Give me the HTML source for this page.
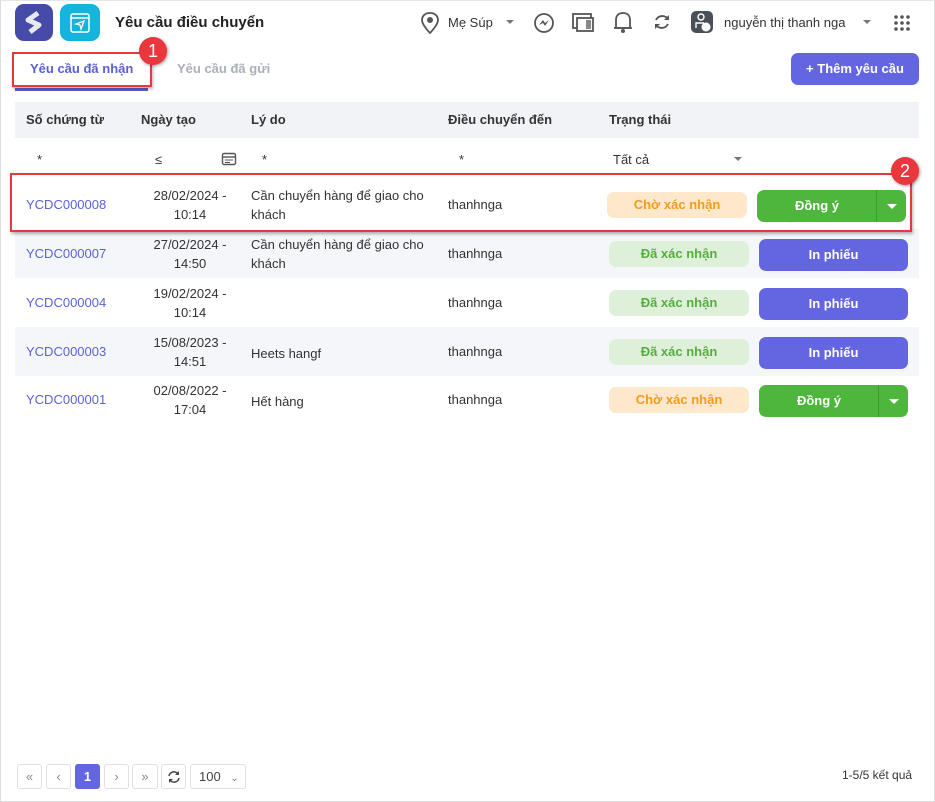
<!DOCTYPE html>
<html><head><meta charset="utf-8"><style>
*{box-sizing:border-box;margin:0;padding:0}
body{width:935px;height:802px;background:#fff;font-family:"Liberation Sans","Noto Sans CJK SC",sans-serif;color:#333;position:relative;overflow:hidden;font-size:13px}
.frame{position:absolute;left:0;top:0;width:935px;height:802px;border:1px solid #dcdcdc;border-top:1px solid #e6e6e6}
.abs{position:absolute}
.hdr{position:absolute;left:15px;top:102px;width:904px;height:36px;background:#f2f3f7;font-weight:bold;font-size:13px}
.hdr span{position:absolute;top:10px}
.row{position:absolute;left:15px;width:904px;height:49px}
.row.g{background:#f5f6f9}
.row span{position:absolute;font-size:13px}
.code{color:#5a62d6;left:11px;top:17px}
.date{left:120px;width:110px;text-align:center;top:6px;line-height:19px}
.rs{left:236px;top:6px;line-height:19px}
.dst{left:433px;top:17px}
.st{left:594px;top:12px;width:140px;height:26px;border-radius:7px;text-align:center;line-height:26px;font-weight:bold;font-size:13px}
.wait{background:#fde8cc;color:#f59b1c}
.ok{background:#dff0da;color:#55ad3e}
.btn{position:absolute;left:744px;top:10px;width:149px;height:32px;border-radius:7px;color:#fff;font-weight:bold;text-align:center;line-height:32px}
.pr{background:#6366e0}
.gr{background:#4eb63d}
.pg{position:absolute;top:764px;height:25px;border:1px solid #dfe1e6;border-radius:3px;text-align:center;line-height:23px;color:#888;font-size:13px}
.mark{position:absolute;z-index:5;border:2.5px solid #e8383d;box-shadow:1px 2px 3px rgba(0,0,0,.3)}
.num{position:absolute;z-index:6;width:28px;height:28px;border-radius:50%;background:#e8383d;color:#fff;font-size:18px;text-align:center;line-height:28px;box-shadow:1px 1px 3px rgba(0,0,0,.4)}
</style></head><body>
<div class="frame"></div>
<div class="abs" style="left:15px;top:4px;width:38px;height:37px;border-radius:9px;background:#464aa8"><svg width="38" height="37"><path d="M23 9 L13 16 L24 21 L15 28" stroke="#e8e8f2" stroke-width="5" fill="none" stroke-linejoin="round"/></svg></div>
<div class="abs" style="left:60px;top:4px;width:40px;height:37px;border-radius:9px;background:#14b4dc"><svg width="40" height="37"><rect x="11" y="10" width="18" height="18" rx="2" fill="none" stroke="#fff" stroke-width="1.5"/><line x1="11" y1="14" x2="29" y2="14" stroke="#fff" stroke-width="1.5"/><path d="M16 20 L24 17 L21 25 L20 21 Z" fill="none" stroke="#fff" stroke-width="1.3"/></svg></div>
<div class="abs" style="left:115px;top:14px;font-size:15px;font-weight:bold;color:#222">Yêu cầu điều chuyển</div>
<svg class="abs" style="left:420px;top:11px" width="20" height="24"><path d="M10 2 C4 2 2 6 2 9 C2 14 10 22 10 22 C10 22 18 14 18 9 C18 6 16 2 10 2Z" fill="none" stroke="#555" stroke-width="1.8"/><circle cx="10" cy="9" r="3" fill="#555"/></svg>
<div class="abs" style="left:448px;top:15px;color:#333">Mẹ Súp</div>
<div class="abs" style="left:506px;top:20px;border:4px solid transparent;border-top:4px solid #777"></div>
<svg class="abs" style="left:533px;top:12px" width="22" height="22"><circle cx="11" cy="11" r="9" fill="none" stroke="#555" stroke-width="1.8"/><path d="M6 13 L10 8 L12 11 L16 8 L12 14 L10 11 Z" fill="#555"/></svg>
<svg class="abs" style="left:571px;top:12px" width="24" height="22"><rect x="2" y="2" width="18" height="14" fill="none" stroke="#555" stroke-width="1.8"/><rect x="6" y="6" width="16" height="13" fill="#fff" stroke="#555" stroke-width="1.8"/><rect x="15" y="8" width="5" height="9" fill="#888"/></svg>
<svg class="abs" style="left:612px;top:10px" width="22" height="24"><path d="M4 18 L4 10 C4 5 7 3 11 3 C15 3 18 5 18 10 L18 18 Z" fill="none" stroke="#555" stroke-width="1.8"/><line x1="2" y1="18" x2="20" y2="18" stroke="#555" stroke-width="1.8"/><circle cx="11" cy="21" r="2" fill="#555"/></svg>
<svg class="abs" style="left:652px;top:12px" width="20" height="20"><path d="M4 8 A7 7 0 0 1 16 7" fill="none" stroke="#555" stroke-width="1.8"/><path d="M16 12 A7 7 0 0 1 4 13" fill="none" stroke="#555" stroke-width="1.8"/><path d="M17 3 L17 8 L12 8Z" fill="#555"/><path d="M3 17 L3 12 L8 12Z" fill="#555"/></svg>
<div class="abs" style="left:691px;top:11px;width:22px;height:22px;border-radius:5px;background:#4b4f5a"><svg width="22" height="22"><circle cx="10" cy="6" r="3" fill="none" stroke="#fff" stroke-width="1.4"/><path d="M5 17 L5 12 L13 12" fill="none" stroke="#fff" stroke-width="1.4"/><circle cx="15" cy="16" r="4.5" fill="#fff"/></svg></div>
<div class="abs" style="left:724px;top:15px;color:#333">nguyễn thị thanh nga</div>
<div class="abs" style="left:863px;top:20px;border:4px solid transparent;border-top:4px solid #777"></div>
<svg class="abs" style="left:893px;top:14px" width="18" height="18"><g fill="#555"><circle cx="3" cy="3" r="1.8"/><circle cx="9" cy="3" r="1.8"/><circle cx="15" cy="3" r="1.8"/><circle cx="3" cy="9" r="1.8"/><circle cx="9" cy="9" r="1.8"/><circle cx="15" cy="9" r="1.8"/><circle cx="3" cy="15" r="1.8"/><circle cx="9" cy="15" r="1.8"/><circle cx="15" cy="15" r="1.8"/></g></svg>
<div class="abs" style="left:30px;top:61px;color:#5a5fd6;font-weight:bold;font-size:13px">Yêu cầu đã nhận</div>
<div class="abs" style="left:15px;top:88px;width:133px;height:3px;background:#5a5fc8"></div>
<div class="mark" style="left:12px;top:52px;width:140px;height:35px"></div>
<div class="num" style="left:139px;top:37px">1</div>
<div class="abs" style="left:177px;top:61px;color:#aab0b8;font-weight:bold">Yêu cầu đã gửi</div>
<div class="abs" style="left:791px;top:53px;width:128px;height:32px;border-radius:7px;background:#6366e0;color:#fff;font-weight:bold;text-align:center;line-height:32px">+ Thêm yêu cầu</div>
<div class="hdr"><span style="left:11px">Số chứng từ</span><span style="left:126px">Ngày tạo</span><span style="left:236px">Lý do</span><span style="left:433px">Điều chuyển đến</span><span style="left:594px">Trạng thái</span></div>
<div class="abs" style="left:37px;top:152px">*</div>
<div class="abs" style="left:155px;top:152px">≤</div>
<svg class="abs" style="left:221px;top:151px" width="16" height="15"><rect x="1.5" y="2.5" width="13" height="11" rx="1.5" fill="none" stroke="#555" stroke-width="1.4"/><line x1="1.5" y1="6" x2="14.5" y2="6" stroke="#555" stroke-width="1.4"/><line x1="4" y1="9" x2="12" y2="9" stroke="#555"/><line x1="4" y1="11.5" x2="9" y2="11.5" stroke="#555"/></svg>
<div class="abs" style="left:262px;top:152px">*</div>
<div class="abs" style="left:459px;top:152px">*</div>
<div class="abs" style="left:613px;top:152px">Tất cả</div>
<div class="abs" style="left:734px;top:157px;border:4px solid transparent;border-top:4px solid #777"></div>
<div class="row" style="top:180px"><span class="code">YCDC000008</span><span class="date">28/02/2024 -<br>10:14</span><span class="rs">Cần chuyển hàng để giao cho<br>khách</span><span class="dst">thanhnga</span><span class="st wait" style="left:592px">Chờ xác nhận</span><div class="btn gr" style="left:742px;width:149px;text-align:left"><span style="position:absolute;left:0;width:120px;text-align:center">Đồng ý</span><span style="position:absolute;left:119px;top:0;width:1px;height:32px;background:#3e9a30"></span><span style="position:absolute;left:130px;top:14px;border:5px solid transparent;border-top:5px solid #fff"></span></div></div>
<div class="row g" style="top:229px"><span class="code">YCDC000007</span><span class="date">27/02/2024 -<br>14:50</span><span class="rs">Cần chuyển hàng để giao cho<br>khách</span><span class="dst">thanhnga</span><span class="st ok">Đã xác nhận</span><div class="btn pr">In phiếu</div></div>
<div class="mark" style="left:10px;top:173px;width:902px;height:59px"></div>
<div class="num" style="left:891px;top:157px">2</div>
<div class="row" style="top:278px"><span class="code">YCDC000004</span><span class="date">19/02/2024 -<br>10:14</span><span class="dst">thanhnga</span><span class="st ok">Đã xác nhận</span><div class="btn pr">In phiếu</div></div>
<div class="row g" style="top:327px"><span class="code">YCDC000003</span><span class="date">15/08/2023 -<br>14:51</span><span class="rs" style="top:17px">Heets hangf</span><span class="dst">thanhnga</span><span class="st ok">Đã xác nhận</span><div class="btn pr">In phiếu</div></div>
<div class="row" style="top:375px"><span class="code">YCDC000001</span><span class="date">02/08/2022 -<br>17:04</span><span class="rs" style="top:17px">Hết hàng</span><span class="dst">thanhnga</span><span class="st wait">Chờ xác nhận</span><div class="btn gr" style="text-align:left"><span style="position:absolute;left:0;width:120px;text-align:center">Đồng ý</span><span style="position:absolute;left:119px;top:0;width:1px;height:32px;background:#3e9a30"></span><span style="position:absolute;left:130px;top:14px;border:5px solid transparent;border-top:5px solid #fff"></span></div></div>
<div class="pg" style="left:17px;width:25px">«</div>
<div class="pg" style="left:46px;width:25px">‹</div>
<div class="pg" style="left:75px;width:25px;background:#6366e0;border-color:#6366e0;color:#fff;font-weight:bold">1</div>
<div class="pg" style="left:104px;width:25px">›</div>
<div class="pg" style="left:132px;width:26px">»</div>
<div class="pg" style="left:161px;width:25px"><svg width="16" height="16" style="margin-top:4px"><path d="M3 7 A5 5 0 0 1 12 5" fill="none" stroke="#444" stroke-width="1.5"/><path d="M13 9 A5 5 0 0 1 4 11" fill="none" stroke="#444" stroke-width="1.5"/><path d="M13 2 L13 6 L9 6Z" fill="#444"/><path d="M3 14 L3 10 L7 10Z" fill="#444"/></svg></div>
<div class="pg" style="left:190px;width:56px;text-align:left;padding-left:8px;color:#444">100 <span style="font-size:10px;color:#777;margin-left:6px">⌄</span></div>
<div class="abs" style="left:842px;top:768px;font-size:12px;color:#333">1-5/5 kết quả</div>
</body></html>
